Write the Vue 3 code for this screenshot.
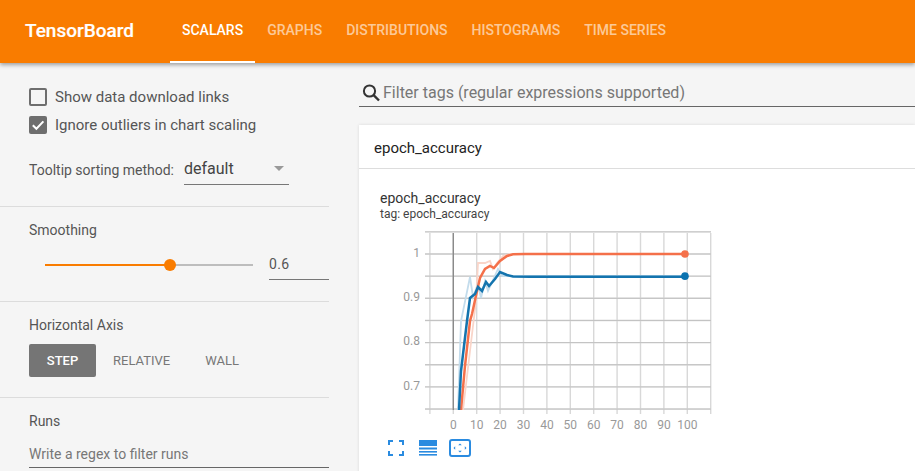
<script setup>
const tabs = ['Scalars', 'Graphs', 'Distributions', 'Histograms', 'Time Series']
const xTicks = [0, 10, 20, 30, 40, 50, 60, 70, 80, 90, 100]
const yTicks = [1, 0.9, 0.8, 0.7]
const X = (v) => 453.3 + 2.34 * v
const Y = (v) => 253 + (1 - v) * 443
const vLines = [-10, ...xTicks, 110]
const hLines = [1.05, 1, 0.95, 0.9, 0.85, 0.8, 0.75, 0.7, 0.65]
const blueRaw = '458,409 460,350 461,320 470,276 473,296 478,283 481,297 485,280 488,290 498,268 502,275 510,275 684,275'
const blue = '459,409 461,370 464,345 467,320 470,297 475,293 478,286 482,290 486,281 489,285 495,278 500,271 507,274 513,275.5 530,275.8 684,275.8'
const orangeRaw = '463,409 470,350 476,300 478,262 485,262 490,260 493,268 497,262 503,255 510,253 684,253'
const orange = '461,409 465,365 470,320 472,313 477,290 480,277 485,268 490,265 494,267 500,260 507,255 513,253.3 525,253 684,253'
</script>

<template>
  <div class="page">
    <header class="topbar">
      <div class="brand">TensorBoard</div>
      <nav class="tabs">
        <div v-for="(t, i) in tabs" :key="t" class="tab" :class="{ active: i === 0 }">{{ t }}</div>
      </nav>
    </header>
    <div class="main">
      <aside class="side">
        <section class="sec sec-a">
          <label class="check"><span class="box"></span>Show data download links</label>
          <label class="check">
            <span class="box on">
              <svg viewBox="0 0 18 18" width="18" height="18"><path d="M3.8 9.2l3.6 3.6 7-7.4" fill="none" stroke="#fff" stroke-width="2"/></svg>
            </span>Ignore outliers in chart scaling
          </label>
          <div class="sortrow">
            <span class="lab">Tooltip sorting method:</span>
            <div class="select"><span>default</span><i class="caret"></i></div>
          </div>
        </section>
        <section class="sec sec-b">
          <div class="lab">Smoothing</div>
          <div class="sliderrow">
            <div class="slider"><div class="fill"></div><div class="thumb"></div></div>
            <div class="num">0.6</div>
          </div>
        </section>
        <section class="sec sec-c">
          <div class="lab">Horizontal Axis</div>
          <div class="btns">
            <div class="btn sel">Step</div>
            <div class="btn rel">Relative</div>
            <div class="btn wall">Wall</div>
          </div>
        </section>
        <section class="sec-d">
          <div class="lab">Runs</div>
          <div class="regex">Write a regex to filter runs</div>
        </section>
      </aside>
      <main class="content">
        <div class="search">
          <svg viewBox="0 0 20 20" width="20" height="20"><circle cx="8.5" cy="8" r="5.6" fill="none" stroke="#333" stroke-width="2"/><path d="M12.6 12.1l5.4 5.4" stroke="#333" stroke-width="2.4" fill="none"/></svg>
          <span>Filter tags (regular expressions supported)</span>
        </div>
        <div class="card">
          <div class="cardhead">epoch_accuracy</div>
          <div class="cardbody">
            <div class="ctitle">epoch_accuracy</div>
            <div class="ctag">tag: epoch_accuracy</div>
            <svg class="chart" width="340" height="218" viewBox="374 221 340 218">
              <g stroke="#d8d8d8" stroke-width="1.4">
                <line v-for="v in vLines" :key="'v' + v" :x1="X(v)" :x2="X(v)" y1="232" y2="413" />
                <line v-for="h in hLines" :key="'h' + h" x1="425" x2="711" :y1="Y(h)" :y2="Y(h)" />
              </g>
              <g stroke="#b8b8b8" stroke-width="0.7">
                <line v-for="h in hLines" :key="'d' + h" x1="425" x2="711" :y1="Y(h)" :y2="Y(h)" />
              </g>
              <line x1="453.3" x2="453.3" y1="232" y2="409" stroke="#8a8a8a" stroke-width="1.4" />
              <polyline :points="orangeRaw" fill="none" stroke="#f9d5c9" stroke-width="1.8" />
              <polyline :points="blueRaw" fill="none" stroke="#c3dcec" stroke-width="1.8" />
              <polyline :points="orange" fill="none" stroke="#f4704a" stroke-width="2.5" />
              <polyline :points="blue" fill="none" stroke="#1474ae" stroke-width="2.5" />
              <circle :cx="X(99)" :cy="Y(1)" r="3.8" fill="#f4704a" />
              <circle :cx="X(99)" :cy="Y(0.95)" r="3.8" fill="#0a72b0" />
              <g class="axis">
                <text v-for="y in yTicks" :key="'y' + y" x="420" :y="Y(y) + 2.8" text-anchor="end">{{ y }}</text>
                <text v-for="x in xTicks" :key="'x' + x" :x="X(x)" y="427.5" text-anchor="middle">{{ x }}</text>
              </g>
            </svg>
            <div class="tools">
              <svg width="16" height="16" viewBox="0 0 16 16" fill="none" stroke="#2a8be0" stroke-width="2"><path d="M1 5V1h4M11 1h4v4M15 11v4h-4M5 15H1v-4"/></svg>
              <svg width="20" height="16" viewBox="0 0 20 16" fill="#2a8be0"><rect x="1" y="0" width="18" height="6"/><rect x="1" y="7.5" width="18" height="2"/><rect x="1" y="11" width="18" height="1.6"/><rect x="1" y="14" width="18" height="1.6"/></svg>
              <svg width="22" height="18" viewBox="0 0 22 18" fill="none"><rect x="1" y="1" width="20" height="16" rx="2" stroke="#2a8be0" stroke-width="2"/><path d="M11 4.5l-1.8 1.7h3.6zM11 13.5l-1.8-1.7h3.6zM4.5 9l1.7-1.8v3.6zM17.5 9l-1.7-1.8v3.6z" fill="#2a8be0"/></svg>
            </div>
          </div>
        </div>
      </main>
    </div>
  </div>
</template>

<style scoped>
.page { width: 915px; height: 471px; overflow: hidden; background: #f5f5f5; font-family: Roboto, "Liberation Sans", sans-serif; display: flex; flex-direction: column; color: #555; }
.topbar { height: 63px; flex: none; background: #f97c00; display: flex; align-items: stretch; padding-left: 25px; box-shadow: 0 2px 4px rgba(0,0,0,.35); position: relative; z-index: 2; }
.brand { color: #fff; font-size: 19px; font-weight: 500; line-height: 61px; width: 145px; -webkit-text-stroke: 0.2px #fff; }
.tabs { display: flex; }
.tab { padding: 0 12px; font-size: 14px; font-weight: 500; text-transform: uppercase; line-height: 60px; color: rgba(255,255,255,.6); border-bottom: 2px solid transparent; height: 63px; box-sizing: border-box; }
.tab.active { color: #fff; border-bottom-color: #fff; }
.main { flex: 1; display: flex; min-height: 0; }
.side { width: 329px; flex: none; margin-right: 30px; }
.sec { border-bottom: 1px solid #dcdcdc; padding-left: 29px; box-sizing: border-box; }
.sec-a { height: 144px; padding-top: 25px; }
.check { display: flex; align-items: center; height: 18px; margin-bottom: 10px; font-size: 15px; color: #555; }
.box { width: 18px; height: 18px; box-sizing: border-box; border: 2px solid #6e6e6e; border-radius: 2px; margin-right: 8px; flex: none; display: block; }
.box.on { background: #6e6e6e; border: 0; }
.box svg { display: block; }
.lab { font-size: 14px; color: #555; }
.sortrow { display: flex; align-items: center; margin-top: 17px; height: 35px; }
.sortrow .lab { width: 155px; flex: none; padding-top: 2px; }
.select { width: 105px; height: 33px; box-sizing: border-box; border-bottom: 1px solid #777; display: flex; justify-content: space-between; align-items: center; font-size: 16px; color: #444; padding-right: 5px; }
.caret { width: 0; height: 0; border: 5.5px solid transparent; border-top-color: #999; border-bottom: 0; }
.sec-b { height: 95px; padding-top: 15px; }
.sliderrow { display: flex; align-items: center; margin-top: 11px; }
.slider { width: 208px; height: 2px; background: #bdbdbd; margin-left: 16px; position: relative; }
.fill { width: 125px; height: 2px; background: #f97c00; }
.thumb { position: absolute; left: 119px; top: -5px; width: 12px; height: 12px; border-radius: 50%; background: #f97c00; }
.num { width: 60px; margin-left: 16px; height: 29px; box-sizing: border-box; border-bottom: 1px solid #777; font-size: 14px; letter-spacing: 0.3px; color: #555; line-height: 26px; margin-top: 2px; }
.sec-c { height: 96px; padding-top: 15px; }
.btns { display: flex; margin-top: 11px; align-items: center; font-size: 13px; text-transform: uppercase; color: #777; }
.btn { height: 33px; line-height: 33px; border-radius: 2px; }
.btn.sel { width: 67px; text-align: center; background: #757575; color: #fff; font-weight: 500; }
.btn.rel { margin-left: 17px; }
.btn.wall { margin-left: 35px; }
.sec-d { padding: 15px 0 0 29px; }
.regex { margin-top: 9px; width: 300px; height: 30px; box-sizing: border-box; border-bottom: 1px solid #666; font-size: 14px; color: #777; line-height: 32px; }
.content { flex: 1; min-width: 0; padding-top: 16px; }
.search { height: 27px; border-bottom: 1px solid #666; display: flex; align-items: center; padding-left: 2px; font-size: 16px; color: #777; gap: 2px; }
.search svg { flex: none; }
.card { margin-top: 18px; background: #fff; height: 350px; box-shadow: 0 0 3px rgba(0,0,0,.12); }
.cardhead { height: 44px; box-sizing: border-box; padding-left: 15px; border-bottom: 1px solid #ddd; font-size: 15px; line-height: 46px; color: #222; }
.cardbody { padding: 20px 0 0 21px; position: relative; }
.ctitle { font-size: 14px; line-height: 18px; color: #333; }
.ctag { font-size: 12px; line-height: 13px; color: #444; margin-top: 1px; }
.chart { display: block; margin-left: -6px; margin-top: 1px; }
.axis { font-size: 12px; font-family: Roboto, sans-serif; fill: #999; }
.tools { display: flex; align-items: center; margin: -1px 0 0 8px; }
.tools svg { display: block; flex: none; }
.tools svg:nth-child(2) { margin-left: 14px; }
.tools svg:nth-child(3) { margin-left: 11px; }
</style>

<style>
html, body { margin: 0; overflow: hidden; }
</style>
